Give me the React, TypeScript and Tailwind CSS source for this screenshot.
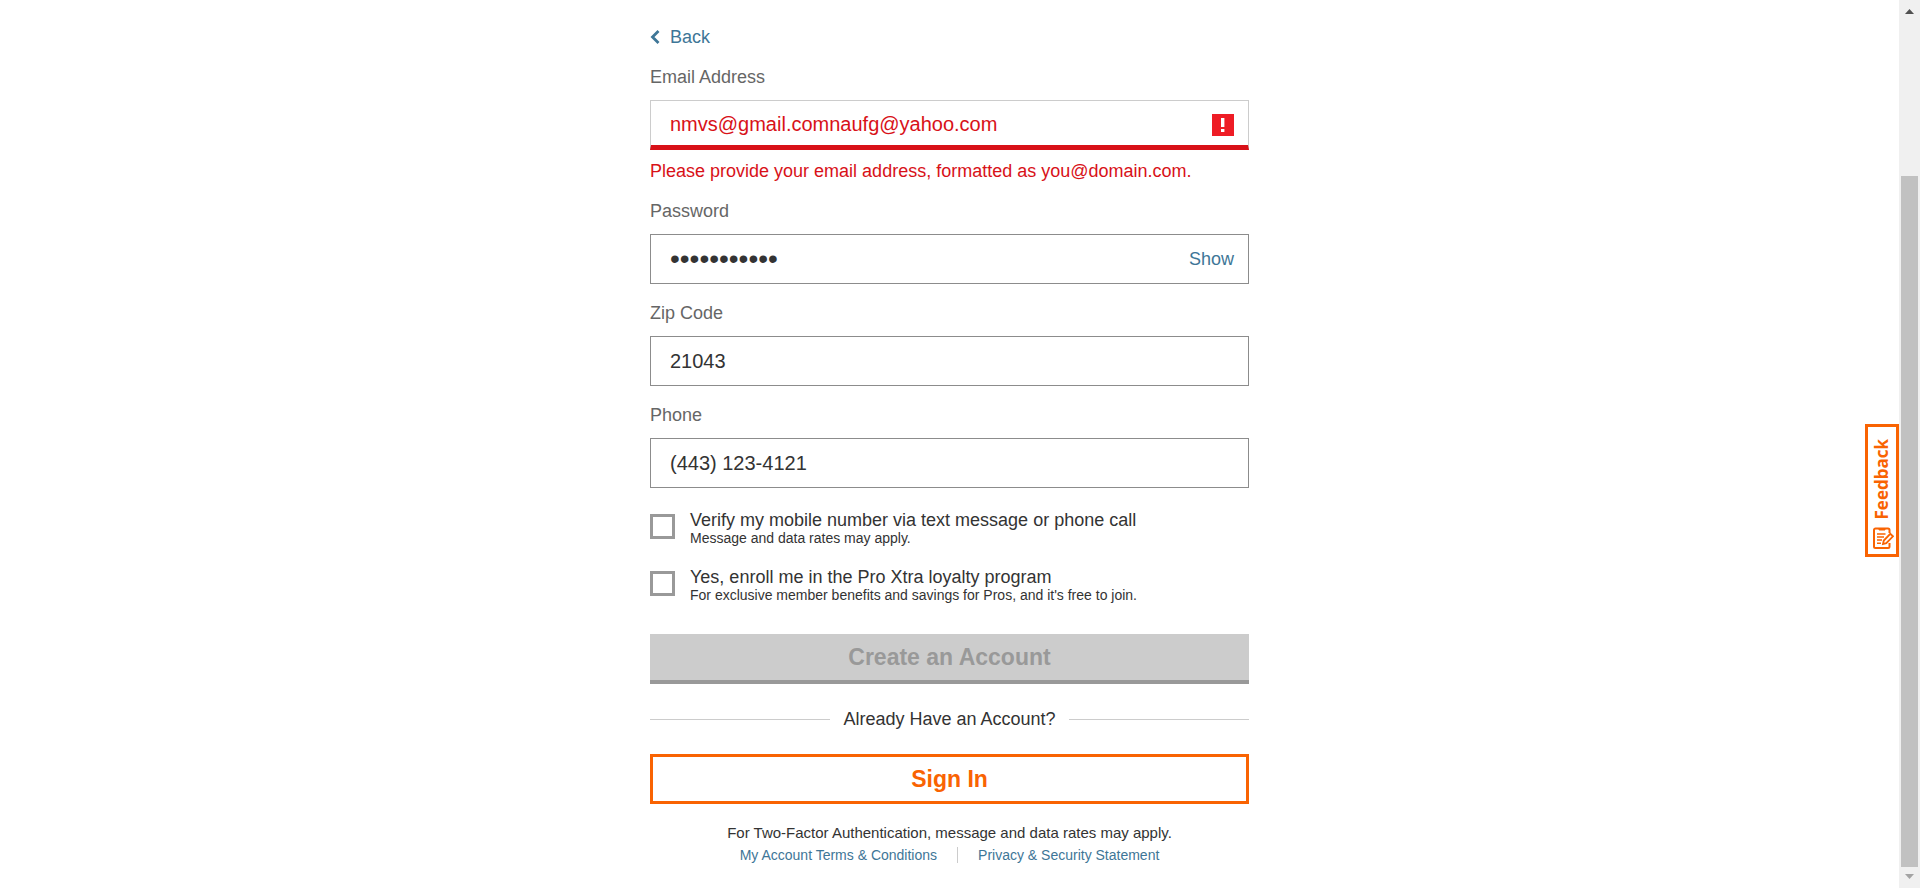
import { useState } from "react";
import type { InputHTMLAttributes, ReactNode } from "react";

type FieldProps = InputHTMLAttributes<HTMLInputElement> & {
  id: string;
  label: string;
  error?: string;
  adornment?: ReactNode;
};

function Field({ id, label, error, adornment, type = "text", ...rest }: FieldProps) {
  return (
    <div>
      <label htmlFor={id} className="mb-3 block text-lg leading-[22px] text-[#666666]">
        {label}
      </label>
      <div
        className={
          error
            ? "flex h-[50px] items-center border border-b-[5px] border-[#cccccc] border-b-[#d81118] pt-[3px] pr-3.5 pl-[19px]"
            : "flex h-[50px] items-center border border-[#8c8c8c] pr-3.5 pl-[19px]"
        }
      >
        <input
          id={id}
          type={type}
          aria-invalid={Boolean(error)}
          aria-describedby={error ? id + "-error" : undefined}
          className={
            error
              ? "h-full min-w-0 flex-1 bg-transparent text-xl text-[#d81118] outline-none"
              : type === "password"
                ? "h-full min-w-0 flex-1 bg-transparent text-[28px] text-[#333333] outline-none"
                : "h-full min-w-0 flex-1 bg-transparent text-xl text-[#333333] outline-none"
          }
          {...rest}
        />
        {adornment}
      </div>
      {error && (
        <p id={id + "-error"} className="mt-2.5 text-lg leading-[22px] text-[#d81118]">
          {error}
        </p>
      )}
    </div>
  );
}

function CheckRow({ id, title, note }: { id: string; title: string; note: string }) {
  return (
    <div className="flex items-start gap-[15px]">
      <input
        id={id}
        type="checkbox"
        className="mt-1 size-[25px] shrink-0 appearance-none border-3 border-[#999999] bg-white checked:bg-[#f96302]"
      />
      <label htmlFor={id} className="text-[#333333]">
        <span className="block text-lg leading-5">{title}</span>
        <span className="block text-sm leading-4">{note}</span>
      </label>
    </div>
  );
}

function AlertIcon() {
  return (
    <svg viewBox="0 0 22 22" className="size-[22px] shrink-0" aria-hidden="true">
      <rect width="22" height="22" fill="#ee1c25" />
      <path d="M9 4h3.400v9H9zM9 15h3.400v3H9z" fill="#fff" />
    </svg>
  );
}

function FeedbackIcon() {
  return (
    <svg viewBox="0 0 21 22" className="ml-0.5 h-[22px] w-[21px]" fill="none" stroke="#f96302" aria-hidden="true">
      <path d="M16.500 6V3A1.500 1.500 0 0 0 15 1.500H2.500A1.500 1.500 0 0 0 1 3v16.500A1.500 1.500 0 0 0 2.500 21H15a1.500 1.500 0 0 0 1.500-1.500V16" strokeWidth="2" />
      <path d="M6 1.500h6V3H6z" fill="#f96302" />
      <path d="M4 7h8.500M4 10h7M4 13h5M4 16.200h4" strokeWidth="1.500" />
      <path d="M10 17l.8-3.500L17.300 6.800l2.700 2.500-6.700 6.900z" fill="#fff" strokeWidth="1.800" />
    </svg>
  );
}

export default function App() {
  const [email, setEmail] = useState("nmvs@gmail.comnaufg@yahoo.com");
  const [password, setPassword] = useState("password123");
  const [zip, setZip] = useState("21043");
  const [phone, setPhone] = useState("(443) 123-4121");

  return (
    <div className="flex min-h-screen bg-white font-['Liberation_Sans',Arial,sans-serif]">
      <main className="min-w-0 flex-1 px-4 pt-[26px] pb-4">
        <form className="mx-auto max-w-[599px]" onSubmit={(e) => e.preventDefault()}>
          <a href="#back" className="flex w-fit items-center gap-2.5 text-lg leading-[22px] text-[#3e7697]">
            <svg viewBox="0 0 10 14" className="h-3.5 w-2.5" fill="none" stroke="currentColor" strokeWidth="2.800" aria-hidden="true">
              <path d="M8.500 1L2.500 7l6 6" />
            </svg>
            Back
          </a>

          <div className="mt-[18px] flex flex-col gap-[18px]">
            <Field
              id="email"
              label="Email Address"
              value={email}
              onChange={(e) => setEmail(e.target.value)}
              error="Please provide your email address, formatted as you@domain.com."
              adornment={<AlertIcon />}
            />
            <Field
              id="password"
              label="Password"
              type="password"
              value={password}
              onChange={(e) => setPassword(e.target.value)}
              adornment={
                <button type="button" className="text-lg leading-[22px] text-[#3e7697]">
                  Show
                </button>
              }
            />
            <Field id="zip" label="Zip Code" value={zip} onChange={(e) => setZip(e.target.value)} />
            <Field id="phone" label="Phone" value={phone} onChange={(e) => setPhone(e.target.value)} />
          </div>

          <div className="mt-[22px] flex flex-col gap-[21px]">
            <CheckRow
              id="verify"
              title="Verify my mobile number via text message or phone call"
              note="Message and data rates may apply."
            />
            <CheckRow
              id="enroll"
              title="Yes, enroll me in the Pro Xtra loyalty program"
              note="For exclusive member benefits and savings for Pros, and it's free to join."
            />
          </div>

          <button
            type="submit"
            disabled
            className="mt-[31px] block h-[50px] w-full border-b-4 border-[#999999] bg-[#cccccc] text-[23px] font-bold text-[#999999]"
          >
            Create an Account
          </button>

          <div className="mt-6 flex items-center gap-[13px] text-lg leading-[22px] text-[#333333]">
            <span className="h-px flex-1 bg-[#cccccc]" />
            Already Have an Account?
            <span className="h-px flex-1 bg-[#cccccc]" />
          </div>

          <button
            type="button"
            className="mt-6 block h-[50px] w-full border-3 border-[#f96302] bg-white text-[23px] font-bold text-[#f96302]"
          >
            Sign In
          </button>

          <p className="mt-[18px] text-center text-[15px] leading-[22px] text-[#333333]">
            For Two-Factor Authentication, message and data rates may apply.
          </p>
          <div className="mt-[3px] flex items-center justify-center gap-5 text-sm leading-4 text-[#3e7697]">
            <a href="#terms">My Account Terms &amp; Conditions</a>
            <span className="h-4 w-px bg-[#cccccc]" />
            <a href="#privacy">Privacy &amp; Security Statement</a>
          </div>
        </form>
      </main>

      <button
        type="button"
        className="fixed top-[424px] right-[21px] flex w-[34px] flex-col items-center gap-2 border-3 border-[#f96302] bg-white pt-3 pb-[5px] text-[#f96302]"
      >
        <span className="rotate-180 font-['Open_Sans',sans-serif] text-[17px] leading-5 font-bold [writing-mode:vertical-rl]">
          Feedback
        </span>
        <FeedbackIcon />
      </button>

      <div className="sticky top-0 flex h-screen w-[21px] flex-col items-center bg-[#f0f0f0]" aria-hidden="true">
        <svg viewBox="0 0 9 5" className="mt-[9px] h-[5px] w-[9px]">
          <path d="M0 5l4.500-5L9 5z" fill="#505050" />
        </svg>
        <span className="mt-[162px] w-[17px] flex-1 bg-[#c1c1c1]" />
        <svg viewBox="0 0 9 5" className="mt-[7px] mb-[9px] h-[5px] w-[9px]">
          <path d="M0 0l4.500 5L9 0z" fill="#a3a3a3" />
        </svg>
      </div>
    </div>
  );
}
